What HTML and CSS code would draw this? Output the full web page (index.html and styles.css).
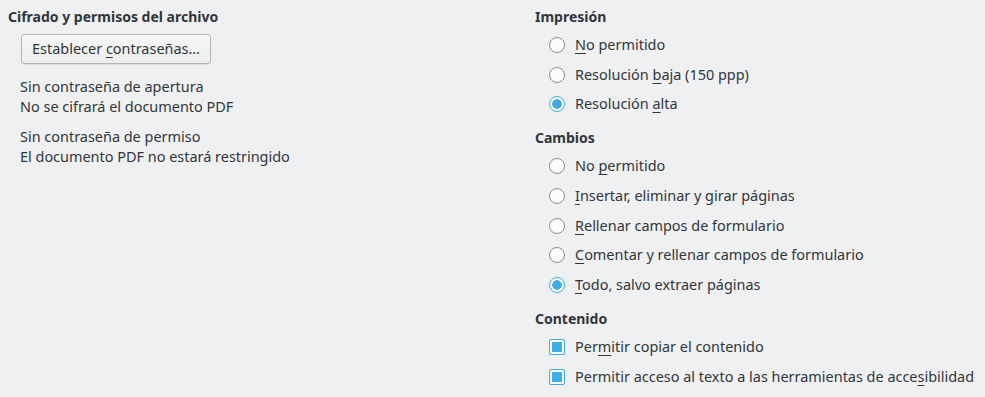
FILE: index.html
```html
<!DOCTYPE html>
<html lang="es">
<head>
<meta charset="utf-8">
<link rel="stylesheet" href="styles.css">
</head>
<body>
<div class="page">
  <section class="col left">
    <h2 class="heading">Cifrado y permisos del archivo</h2>
    <div class="indent">
      <button class="btn">Establecer <u>c</u>ontraseñas…</button>
      <p class="info">Sin contraseña de apertura<br>No se cifrará el documento PDF</p>
      <p class="info">Sin contraseña de permiso<br>El documento PDF no estará restringido</p>
    </div>
  </section>
  <section class="col right">
    <h2 class="heading">Impresión</h2>
    <ul class="options">
      <li class="opt"><span class="radio"></span><span><u>N</u>o permitido</span></li>
      <li class="opt"><span class="radio"></span><span>Resolución <u>b</u>aja (150 ppp)</span></li>
      <li class="opt"><span class="radio on"></span><span>Resolución <u>a</u>lta</span></li>
    </ul>
    <h2 class="heading sub">Cambios</h2>
    <ul class="options">
      <li class="opt"><span class="radio"></span><span>No <u>p</u>ermitido</span></li>
      <li class="opt"><span class="radio"></span><span><u>I</u>nsertar, eliminar y girar páginas</span></li>
      <li class="opt"><span class="radio"></span><span><u>R</u>ellenar campos de formulario</span></li>
      <li class="opt"><span class="radio"></span><span><u>C</u>omentar y rellenar campos de formulario</span></li>
      <li class="opt"><span class="radio on"></span><span><u>T</u>odo, salvo extraer páginas</span></li>
    </ul>
    <h2 class="heading sub">Contenido</h2>
    <ul class="options">
      <li class="opt"><span class="check on"></span><span>Per<u>m</u>itir copiar el contenido</span></li>
      <li class="opt"><span class="check on"></span><span>Permitir acceso al texto a las herramientas de acce<u>s</u>ibilidad</span></li>
    </ul>
  </section>
</div>
</body>
</html>
```
FILE: styles.css
```css
* { box-sizing: border-box; }
html, body {
  margin: 0;
  padding: 0;
  background: #eff0f1;
}
body {
  font-family: "Noto Sans", "DejaVu Sans", sans-serif;
  font-size: 14.45px;
  line-height: 20px;
  color: #31363b;
}
.page {
  display: grid;
  grid-template-columns: 527px 1fr;
  padding: 7px 0 0 8px;
}
.heading {
  margin: 0;
  font-size: 14px;
  font-weight: bold;
  line-height: 20px;
}
.heading.sub {
  margin-top: 9px;
}
.indent {
  padding-left: 13px;
}
.btn {
  display: block;
  margin-top: 7px;
  width: 190px;
  height: 30px;
  padding: 0;
  font: inherit;
  color: #31363b;
  background: linear-gradient(#f5f6f6, #eceded);
  border: 1px solid #b3b5b7;
  border-radius: 3px;
  box-shadow: 0 1px 1px rgba(0,0,0,0.08);
}
.btn u { text-underline-offset: 3px; }
.info {
  margin: 13px 0 0 -1px;
}
.info + .info { margin-top: 10px; }
.options {
  list-style: none;
  margin: 3px 0 0;
  padding: 0 0 0 14px;
}
.opt {
  display: flex;
  align-items: center;
  height: 29.75px;
  gap: 10px;
}
.opt u { text-underline-offset: 3px; }
.radio {
  width: 16px;
  height: 16px;
  border-radius: 50%;
  border: 1px solid #8a8e91;
  background: #fcfcfc;
  flex: none;
}
.radio.on {
  border-color: #3daee9;
  background: radial-gradient(circle, #3daee9 0 4.5px, #fcfcfc 5px);
}
.check {
  width: 16px;
  height: 16px;
  border-radius: 2px;
  border: 1px solid #3daee9;
  flex: none;
  background: #3daee9;
  box-shadow: inset 0 0 0 2px #fcfcfc;
}
```
